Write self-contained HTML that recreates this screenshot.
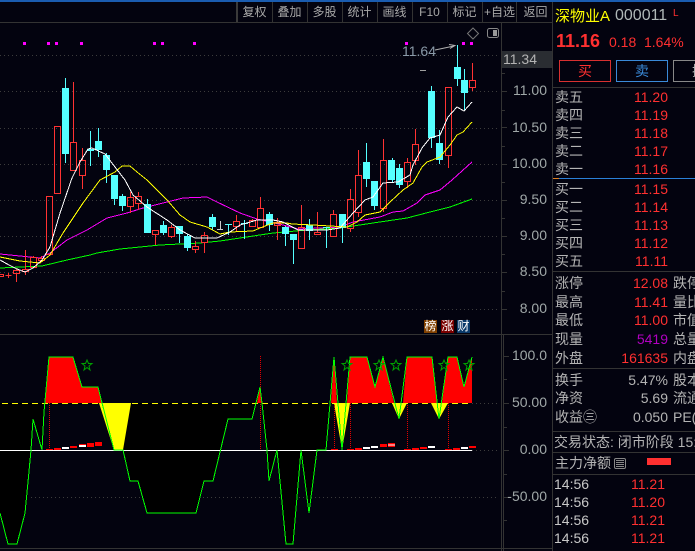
<!DOCTYPE html>
<html><head><meta charset="utf-8">
<style>
html,body{margin:0;padding:0;background:#03030f}
#p{position:relative;width:695px;height:551px;overflow:hidden;background:#03030f;font-family:"Liberation Sans","Noto Sans CJK SC",sans-serif;font-size:14px;color:#b4b4b4}
#p svg{position:absolute;left:0;top:0}
.a{position:absolute;white-space:nowrap;line-height:16px;height:16px}
.l{left:555px}
.v{right:27px;color:#ff3030}
.g{right:27px;color:#b4b4b4}
.m{left:673px}
.t{left:554px}
.w{left:631px;color:#ff3030}
.ax{right:148px;color:#a0a8a8}
.tb{top:4px;color:#a8a8a8;width:35px;text-align:center;font-size:12px}
.bd{position:absolute;top:320px;width:13px;height:13px;line-height:13px;font-size:12px;text-align:center;color:#fff}
</style></head><body><div id="p">
<svg width="695" height="551" viewBox="0 0 695 551">
<rect x="0" y="0" width="695" height="2" fill="#1a5cb0"/>
<g stroke="#333" fill="none" shape-rendering="crispEdges">
<path d="M0 22.5H552M0 334.5H552M0 548.5H552M501.5 22V551M552.5 2V551M503.5 335V551"/>
<path d="M272.5 2V22M307.5 2V22M342.5 2V22M377.5 2V22M412.5 2V22M447.5 2V22M482.5 2V22M516.5 2V22"/>
<path stroke="#3a3a3a" stroke-width="2" d="M237 2V22"/>
<path d="M553 87.5H695M553 271.5H695M553 368.5H695M553 431.5H695M553 452.5H695M553 474.5H695"/>
<path d="M502 55.5h5M502 73.5h3M502 91.5h5M502 110.5h3M502 127.5h5M502 146.5h3M502 164.5h5M502 182.5h3M502 200.5h5M502 218.5h3M502 236.5h5M502 254.5h3M502 272.5h5M502 291.5h3M502 309.5h5M504 356.5h5M504 379.5h3M504 403.5h5M504 427.5h3M504 450.5h5M504 474.5h3M504 497.5h5M504 520.5h3"/>
</g>
<g stroke="#3c3c3c" stroke-dasharray="1 3" fill="none" shape-rendering="crispEdges">
<path d="M0 55.5H499M0 91.5H499M0 128.5H499M0 164.5H499M0 200.5H499M0 236.5H499M0 272.5H499M0 309.5H499"/>
<path d="M472 403.5H499M472 450.5H499M27 497.5H499"/>
</g>
<path fill="#f0f" shape-rendering="crispEdges" d="M23 42h3v3h-3zM47 42h3v3h-3zM55 42h3v3h-3zM80 42h3v3h-3zM153 42h3v3h-3zM161 42h3v3h-3zM193 42h3v3h-3zM405 42h3v3h-3zM462 42h3v3h-3zM470 42h3v3h-3z"/>
<!-- MA lines -->
<g fill="none" stroke-width="1" shape-rendering="crispEdges">
<polyline stroke="#00ff00" points="0,268 20,267 42,266 67,260 90,255 97,253 120,249 140,247 160,245 200,243 220,241 240,238 273,233 307,230 340,228 373,223 407,218 430,212 450,207 472,199"/>
<polyline stroke="#ff00ff" points="0,254 20,256 30,257 40,258 50,253 67,240 87,230 107,218 127,213 143,208 167,202 183,198 207,197 217,202 240,213 257,219 283,225 298,229 340,227 353,222 380,217 393,212 403,211 417,203 425,195 440,190 452,180 472,162"/>
</g>
<!-- red candles -->
<path fill="none" stroke="#ff3232" stroke-width="1" shape-rendering="crispEdges" d="M-2.5 274.5h6v2h-6zM5.5 275.5h6M8.5 273v5M16.5 269v1M16.5 273v9M13.5 270.5h6v3h-6zM25.5 250v19M25.5 271v4M22.5 269.5h6v2h-6zM33.5 256v1M30.5 257.5h6v10h-6zM41.5 256v2M41.5 260v2M38.5 258.5h6v2h-6zM46.5 196.5h6v58h-6zM54.5 126.5h6v67h-6zM73.5 82v60M70.5 142.5h6v28h-6zM82.5 148v12M82.5 175v14M79.5 160.5h6v15h-6zM130.5 192v5M130.5 206v7M127.5 197.5h6v9h-6zM138.5 192v4M138.5 203v7M135.5 196.5h6v7h-6zM155.5 234v11M152.5 230.5h6v4h-6zM171.5 225v2M171.5 236v2M168.5 227.5h6v9h-6zM195.5 241v5M195.5 249v4M192.5 246.5h6v3h-6zM204.5 232v3M204.5 242v11M201.5 235.5h6v7h-6zM236.5 215v6M236.5 226v5M233.5 221.5h6v5h-6zM252.5 219v1M249.5 220.5h6v6h-6zM260.5 197v11M257.5 208.5h6v19h-6zM277.5 218v4M277.5 225v15M274.5 222.5h6v3h-6zM301.5 205v22M301.5 248v1M298.5 227.5h6v21h-6zM317.5 212v20M314.5 232.5h6v2h-6zM333.5 210v4M330.5 214.5h6v22h-6zM350.5 189v10M350.5 228v4M347.5 199.5h6v29h-6zM358.5 150v25M358.5 212v5M355.5 175.5h6v37h-6zM383.5 139v21M383.5 208v4M380.5 160.5h6v48h-6zM407.5 158v4M407.5 181v7M404.5 162.5h6v19h-6zM415.5 129v15M415.5 160v5M412.5 144.5h6v16h-6zM448.5 155v13M445.5 87.5h6v68h-6zM472.5 63v17M472.5 87v4M469.5 80.5h6v7h-6z"/>
<!-- cyan candles -->
<path fill="none" stroke="#55ffff" stroke-width="1" shape-rendering="crispEdges" d="M65.5 78V163M90.5 131V166M98.5 128V157M106.5 153V183M114.5 175V205M122.5 194V211M147.5 199V233M163.5 221V235M179.5 226V243M187.5 234V251M212.5 214V230M228.5 224V235M225 224.5h7M244.5 220V239M241 223.5h7M269.5 212V231M285.5 226V246M293.5 234V264M309.5 219V240M326.5 227V248M323 227.5h7M342.5 214V243M366.5 143V187M374.5 181V210M392.5 158V183M399.5 164V188M431.5 86V148M439.5 130V164M457.5 45V86M464.5 69V110"/>
<path fill="#55ffff" shape-rendering="crispEdges" d="M62 88h7v66h-7zM87 149h7v2h-7zM95 141h7v9h-7zM103 155h7v15h-7zM111 175h7v24h-7zM119 196h7v10h-7zM144 204h7v29h-7zM160 225h7v8h-7zM176 226h7v8h-7zM184 236h7v12h-7zM209 217h7v10h-7zM266 214h7v11h-7zM282 227h7v7h-7zM290 234h7v6h-7zM306 225h7v6h-7zM339 214h7v14h-7zM363 162h7v17h-7zM371 181h7v25h-7zM388 160h7v20h-7zM396 168h7v17h-7zM428 91h7v47h-7zM436 143h7v17h-7zM454 67h7v12h-7zM461 80h7v13h-7z"/>
<path fill="none" stroke="#ccc" shape-rendering="crispEdges" d="M217 229.5h6M220.5 221v9"/>
<g fill="none" stroke-width="1" shape-rendering="crispEdges">
<polyline stroke="#ffff00" points="0,257 10,259 20,261 40,263 50,255 63,233 83,203 100,180 115,172 122,166 130,166 137,172 147,180 167,200 180,215 190,222 207,227 220,234 230,232 253,231 260,228 273,223 287,223 292,224 313,225 347,227 357,222 365,215 380,212 390,202 403,190 413,183 422,167 427,162 440,157 450,145 457,135 463,132 472,122"/>
<polyline stroke="#ffffff" points="0,260 9,265 17,269 25,272 33,268 42,260 50,247 60,213 72,178 80,162 88,149 92,148 105,154 115,167 125,180 133,195 147,207 167,220 180,230 195,238 217,238 230,232 240,225 257,220 273,220 283,222 298,230 327,230 340,228 353,213 365,200 373,197 383,183 398,182 410,175 413,165 422,148 430,138 440,135 448,117 457,107 464,111 472,102"/>
</g>
<!-- top marks -->
<path fill="none" stroke="#777" d="M473 28l5.500 5.500-5.500 5.500-5.500-5.500z"/>
<rect x="487.500" y="28.500" width="11" height="9" rx="2" fill="none" stroke="#888"/>
<rect x="493" y="30" width="4" height="6" fill="#999"/>
<path fill="none" stroke="#b0b0b0" d="M435 50L454 46M449 44.500L455 45.500L450 48.500"/>
<path stroke="#a0a0a0" d="M420 70.500h6"/>
<!-- lower pane -->
<polygon fill="#000" points="0,403 0,513 8,544 17,544 25,513 28,497 28,482 31,450 33,419 42,450 44,412 49,357 73,357 82,387 98,387 114,450 123,450 130,481 138,481 147,513 196,513 204,481 213,481 228,419 252,419 260,387 262,403 267,450 269,481 277,450 286,544 293,544 301,450 309,513 317,450 326,450 334,357 330,403"/>
<path fill="#ff0000" d="M45 403L49 357H73L82 387H98L102 403ZM257 403L260 387L262 403ZM331 403L334 357L337 403ZM347 403L350 357H367L375 387L383 357L394 403ZM403 403L407 357H432L437 403ZM442 403L448 357H457L464 387L472 357V403Z"/>
<path fill="#ffff00" d="M99 403H131L123 450H114ZM334 403H350L342 450ZM392 403H407L399 419ZM431 403H448L439 419Z"/>
<g fill="#ff0000" shape-rendering="crispEdges">
<path d="M46 449h7v1h-7zM54 448h7v2h-7zM70 446h7v2h-7zM79 444h7v3h-7zM87 443h7v4h-7zM95 442h7v4h-7zM331 449h7v1h-7zM347 449h7v1h-7zM355 448h7v2h-7zM380 444h7v3h-7zM388 443h7v4h-7zM404 449h7v1h-7zM412 448h7v2h-7zM420 447h7v2h-7zM445 449h7v1h-7zM453 448h7v2h-7zM469 446h7v2h-7z"/>
</g>
<g fill="#fff" shape-rendering="crispEdges">
<path d="M62 447h7v2h-7zM79 445h7v2h-7zM363 447h7v2h-7zM371 446h7v2h-7zM388 444.500h7v1h-7zM428 446h7v2h-7zM461 447h7v2h-7z"/>
</g>
<g stroke="#e00000" stroke-dasharray="1 1" shape-rendering="crispEdges" fill="none">
<path d="M49.500 403V450M260.500 356V450M334.500 403V450M350.500 403V450M407.500 403V450M448.500 403V450"/>
</g>
<path stroke="#ffff00" stroke-dasharray="6 4" shape-rendering="crispEdges" d="M2 403.500H472"/>
<path stroke="#fff" shape-rendering="crispEdges" d="M0 450.500H472"/>
<polyline fill="none" stroke="#00ff00" stroke-width="1" shape-rendering="crispEdges" points="0,513 8,544 17,544 25,513 28,482 31,450 33,419 42,450 44,412 49,357 73,357 82,387 98,387 114,450 123,450 130,481 138,481 147,513 196,513 204,481 213,481 228,419 252,419 260,387 262,403 267,450 269,481 277,450 286,544 293,544 301,450 309,513 317,450 326,450 334,357 342,450 350,357 367,357 375,387 383,357 399,419 407,357 432,357 439,419 448,357 457,357 464,387 472,357"/>
<g fill="none" stroke="#00a000" stroke-width="1">
<path d="M87 360l1.500 3.500h3.500l-3 2.500 1 4-3-2.500-3 2.500 1-4-3-2.500h3.500z"/>
<path d="M347 360l1.500 3.500h3.500l-3 2.500 1 4-3-2.500-3 2.500 1-4-3-2.500h3.500z"/>
<path d="M379 360l1.500 3.500h3.500l-3 2.500 1 4-3-2.500-3 2.500 1-4-3-2.500h3.500z"/>
<path d="M396 360l1.500 3.500h3.500l-3 2.500 1 4-3-2.500-3 2.500 1-4-3-2.500h3.500z"/>
<path d="M444 360l1.500 3.500h3.500l-3 2.500 1 4-3-2.500-3 2.500 1-4-3-2.500h3.500z"/>
<path d="M469 360l1.500 3.500h3.500l-3 2.500 1 4-3-2.500-3 2.500 1-4-3-2.500h3.500z"/>
</g>
<!-- axis highlight -->
<rect x="502" y="51" width="50" height="17" fill="#2a2d32"/>
<!-- buttons -->
<rect x="559.500" y="60.500" width="51" height="21" fill="none" stroke="#d83030"/>
<rect x="616.500" y="60.500" width="51" height="21" fill="none" stroke="#3a8ad8"/>
<rect x="673.500" y="60.500" width="51" height="21" fill="none" stroke="#888"/>
<!-- blue line -->
<path stroke="#2a80d8" shape-rendering="crispEdges" d="M553 178.500H695"/>
<path stroke="#e08020" shape-rendering="crispEdges" d="M553 178.500H559"/>
<!-- small icon -->
<rect x="614.500" y="458.500" width="11" height="10" rx="1.500" fill="none" stroke="#888"/>
<path stroke="#888" shape-rendering="crispEdges" d="M616 460.500h8M616 462.500h8M616 464.500h8M616 466.500h8"/>
<rect x="647" y="458" width="24" height="7" fill="#ff3030"/>
</svg>

<span class="a tb" style="left:237px">复权</span>
<span class="a tb" style="left:272px">叠加</span>
<span class="a tb" style="left:307px">多股</span>
<span class="a tb" style="left:342px">统计</span>
<span class="a tb" style="left:377px">画线</span>
<span class="a tb" style="left:412px">F10</span>
<span class="a tb" style="left:447px">标记</span>
<span class="a tb" style="left:482px">+自选</span>
<span class="a tb" style="left:518px">返回</span>

<span class="a" style="left:402px;top:43px;color:#8a9aa8">11.64</span>
<span class="a" style="left:503px;top:51px;color:#b4b4b4">11.34</span>
<span class="a ax" style="top:82px">11.00</span>
<span class="a ax" style="top:119px">10.50</span>
<span class="a ax" style="top:155px">10.00</span>
<span class="a ax" style="top:191px">9.50</span>
<span class="a ax" style="top:227px">9.00</span>
<span class="a ax" style="top:263px">8.50</span>
<span class="a ax" style="top:300px">8.00</span>
<span class="a ax" style="top:347px">100.0</span>
<span class="a ax" style="top:394px">50.00</span>
<span class="a ax" style="top:441px">0.00</span>
<span class="a ax" style="top:488px">-50.00</span>

<span class="bd" style="left:424px;background:#804000">榜</span>
<span class="bd" style="left:441px;background:#7a0000">涨</span>
<span class="bd" style="left:457px;background:#0a3a6a">财</span>

<span class="a" style="left:555px;top:9px;font-size:15px;color:#ffff00">深物业A</span>
<span class="a" style="left:615px;top:8px;font-size:16px;color:#b0b8b8">000011</span>
<span class="a" style="left:673px;top:6px;font-size:10px;color:#ff3030">L</span>
<span class="a" style="left:556px;top:33px;font-size:18px;font-weight:bold;color:#ff3030">11.16</span>
<span class="a" style="left:609px;top:34px;color:#ff3030">0.18</span>
<span class="a" style="left:644px;top:34px;color:#ff3030">1.64%</span>
<span class="a" style="left:578px;top:63px;color:#ff3030">买</span>
<span class="a" style="left:635px;top:63px;color:#3a8ad8">卖</span>
<span class="a" style="left:692px;top:63px;color:#b4b4b4">撤</span>

<span class="a l" style="top:89px">卖五</span><span class="a v" style="top:89px">11.20</span>
<span class="a l" style="top:107px">卖四</span><span class="a v" style="top:107px">11.19</span>
<span class="a l" style="top:125px">卖三</span><span class="a v" style="top:125px">11.18</span>
<span class="a l" style="top:143px">卖二</span><span class="a v" style="top:143px">11.17</span>
<span class="a l" style="top:161px">卖一</span><span class="a v" style="top:161px">11.16</span>
<span class="a l" style="top:181px">买一</span><span class="a v" style="top:181px">11.15</span>
<span class="a l" style="top:199px">买二</span><span class="a v" style="top:199px">11.14</span>
<span class="a l" style="top:217px">买三</span><span class="a v" style="top:217px">11.13</span>
<span class="a l" style="top:235px">买四</span><span class="a v" style="top:235px">11.12</span>
<span class="a l" style="top:253px">买五</span><span class="a v" style="top:253px">11.11</span>

<span class="a l" style="top:275px">涨停</span><span class="a v" style="top:275px">12.08</span><span class="a m" style="top:275px">跌停</span>
<span class="a l" style="top:294px">最高</span><span class="a v" style="top:294px">11.41</span><span class="a m" style="top:294px">量比</span>
<span class="a l" style="top:312px">最低</span><span class="a v" style="top:312px">11.00</span><span class="a m" style="top:312px">市值</span>
<span class="a l" style="top:331px">现量</span><span class="a v" style="top:331px;color:#b000c0">5419</span><span class="a m" style="top:331px">总量</span>
<span class="a l" style="top:350px">外盘</span><span class="a v" style="top:350px">161635</span><span class="a m" style="top:350px">内盘</span>

<span class="a l" style="top:372px">换手</span><span class="a g" style="top:372px">5.47%</span><span class="a m" style="top:372px">股本</span>
<span class="a l" style="top:390px">净资</span><span class="a g" style="top:390px">5.69</span><span class="a m" style="top:390px">流通</span>
<span class="a l" style="top:409px">收益㊂</span><span class="a g" style="top:409px">0.050</span><span class="a m" style="top:409px">PE(动)</span>

<span class="a" style="left:554px;top:434px">交易状态: 闭市阶段 15:00</span>
<span class="a" style="left:555px;top:455px">主力净额</span>

<span class="a t" style="top:476px;color:#c8c8c8">14:56</span><span class="a w" style="top:476px">11.21</span>
<span class="a t" style="top:494px;color:#c8c8c8">14:56</span><span class="a w" style="top:494px">11.20</span>
<span class="a t" style="top:512px;color:#c8c8c8">14:56</span><span class="a w" style="top:512px">11.21</span>
<span class="a t" style="top:530px;color:#c8c8c8">14:56</span><span class="a w" style="top:530px">11.21</span>
<span class="a t" style="top:548px;color:#c8c8c8">14:56</span><span class="a w" style="top:548px">11.21</span>
</div></body></html>
